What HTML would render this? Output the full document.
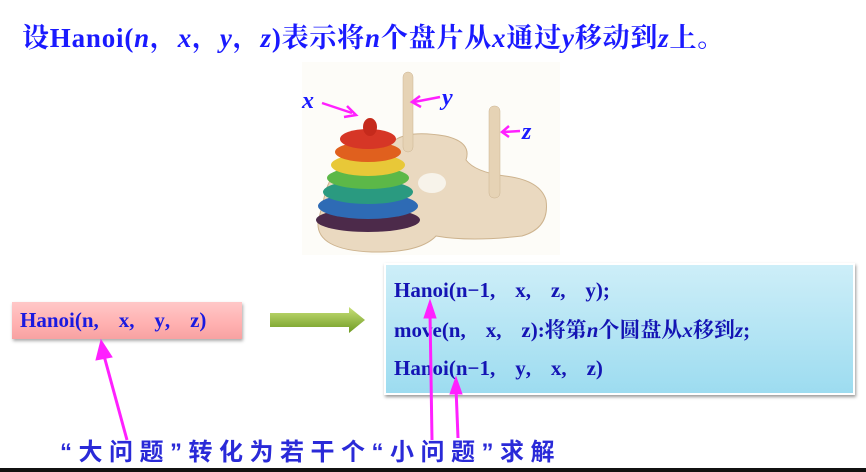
<!DOCTYPE html>
<html><head><meta charset="utf-8"><style>
body{margin:0;width:866px;height:472px;background:#fff;position:relative;overflow:hidden;font-family:"Liberation Serif","Noto Serif CJK SC",serif;}
.t{position:absolute;white-space:nowrap;font-weight:bold;line-height:1;}
.title{left:22px;top:25px;font-size:27px;color:#1a1aff;letter-spacing:0.8px;}
.pink{position:absolute;left:12px;top:302px;width:230px;height:37px;background:linear-gradient(#ffc8c8,#ffb0b0 60%,#f7a2a2);box-shadow:1px 2px 3px #aaa;}
.blue{position:absolute;left:384px;top:263px;width:467px;height:128px;background:linear-gradient(#cdeef8,#9ddcf0);border:2px solid #fff;box-shadow:1px 2px 3px #999;}
.code{font-size:21px;color:#1414b4;}
.c{display:inline-block;width:1.2em;}
.bot{left:60px;top:441px;font-size:24px;color:#2a2ad8;letter-spacing:6.5px;font-family:"Liberation Sans","Noto Sans CJK SC",sans-serif;}
</style></head><body>
<div class="t title">设Hanoi(<i>n</i>，<i>x</i>，<i>y</i>，<i>z</i>)表示将<i>n</i>个盘片从<i>x</i>通过<i>y</i>移动到<i>z</i>上。</div>
<svg style="position:absolute;left:0;top:0" width="866" height="472">
<rect x="302" y="62" width="258" height="193" fill="#fdfcf8"/>
<g fill="#ead9c0" stroke="#cdb38e" stroke-width="1">
<path d="M318 222 Q316 250 372 252 Q420 253 436 236 Q470 242 522 236 Q550 228 546 200 Q540 180 505 176 Q475 172 466 160 Q472 142 445 136 Q410 130 395 140 Q340 150 326 190 Z"/>
</g>
<ellipse cx="432" cy="183" rx="14" ry="10" fill="#f7f3ea"/>
<rect x="403" y="72" width="10" height="80" rx="5" fill="#e6d3b5" stroke="#cbb391" stroke-width="0.5"/>
<rect x="489" y="106" width="11" height="92" rx="5" fill="#e6d3b5" stroke="#cbb391" stroke-width="0.5"/>
<ellipse cx="368" cy="220" rx="52" ry="12" fill="#4c2a4a"/>
<ellipse cx="368" cy="206" rx="50" ry="13" fill="#2e6bb5"/>
<ellipse cx="368" cy="192" rx="45" ry="12" fill="#2a9a80"/>
<ellipse cx="368" cy="178" rx="41" ry="11" fill="#5cb848"/>
<ellipse cx="368" cy="165" rx="37" ry="11" fill="#e8c838"/>
<ellipse cx="368" cy="152" rx="33" ry="10" fill="#e0601e"/>
<ellipse cx="368" cy="139" rx="28" ry="10" fill="#d63626"/>
<ellipse cx="370" cy="127" rx="7" ry="9" fill="#c52a1c"/>
<g stroke="#ff20ff" stroke-width="2.5" fill="none">
<line x1="322" y1="103" x2="352" y2="113"/><path d="M347 106 L356 115 L344 117"/>
<line x1="440" y1="97" x2="414" y2="102"/><path d="M420 96 L412 102 L421 107"/>
<line x1="520" y1="131" x2="504" y2="132"/><path d="M509 126 L502 132 L509 137"/>
</g>
<g font-family="Liberation Serif,serif" font-style="italic" font-weight="bold" font-size="24" fill="#1a1aff">
<text x="302" y="108">x</text><text x="442" y="105">y</text><text x="522" y="139">z</text></g>
<defs><linearGradient id="g" x1="0" y1="0" x2="0" y2="1"><stop offset="0" stop-color="#c8e078"/><stop offset="1" stop-color="#6e9a22"/></linearGradient></defs>
<path d="M270 313 L349 313 L349 307 L365 320 L349 333 L349 327 L270 327 Z" fill="url(#g)"/>
</svg>
<div class="pink"></div>
<div class="t code" style="left:20px;top:310px;color:#1a1ae0">Hanoi(n<span class="c">,</span>x<span class="c">,</span>y<span class="c">,</span>z)</div>
<div class="blue"></div>
<div class="t code" style="left:394px;top:280px">Hanoi(n−1<span class="c">,</span>x<span class="c">,</span>z<span class="c">,</span>y);</div>
<div class="t code" style="left:394px;top:320px">move(n<span class="c">,</span>x<span class="c">,</span>z):将第<i>n</i>个圆盘从<i>x</i>移到<i>z</i>;</div>
<div class="t code" style="left:394px;top:358px">Hanoi(n−1<span class="c">,</span>y<span class="c">,</span>x<span class="c">,</span>z)</div>
<div class="t bot">“大问题”转化为若干个“小问题”求解</div>
<svg style="position:absolute;left:0;top:0" width="866" height="472">
<g stroke="#ff20ff" stroke-width="3" fill="#ff20ff">
<line x1="127" y1="440" x2="103" y2="352"/><path d="M96 360 L101 340 L112 357 Z" stroke-width="1"/>
<line x1="432" y1="440" x2="430" y2="312"/><path d="M424 318 L430 300 L436 318 Z" stroke-width="1"/>
<line x1="458" y1="438" x2="456" y2="388"/><path d="M450 394 L456 377 L462 394 Z" stroke-width="1"/>
</g>
<rect x="0" y="468" width="866" height="4" fill="#111"/>
</svg>
</body></html>
